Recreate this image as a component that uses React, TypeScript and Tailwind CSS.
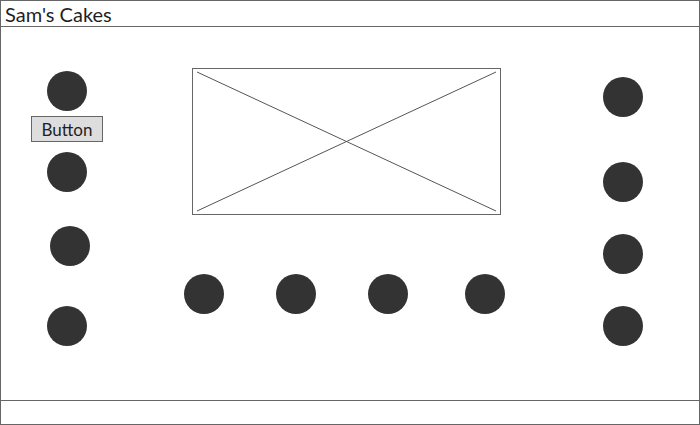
import React from 'react';

const Dot: React.FC<{ className?: string }> = ({ className = '' }) => (
  <div className={`w-[40px] h-[40px] rounded-full bg-[#333333] shrink-0 ${className}`} />
);

export default function App() {
  return (
    <div
      className="w-[700px] h-[425px] border border-[#666666] bg-white flex flex-col text-[#1f1f1f]"
      style={{ fontFamily: 'Lato, "DejaVu Sans", sans-serif' }}
    >
      <header className="h-[26px] border-b border-[#666666] flex items-center pl-[4px]">
        <span className="text-[20px] leading-none">Sam's Cakes</span>
      </header>

      <main className="flex-1 flex items-start">
        {/* left column */}
        <div className="ml-[30px] mt-[44px] w-[72px] flex flex-col items-center">
          <Dot />
          <button className="mt-[5px] w-[72px] h-[26px] bg-[#dddddd] border border-[#666666] text-[17px] leading-none">
            Button
          </button>
          <Dot className="mt-[10px]" />
          <Dot className="mt-[34px] ml-[6px]" />
          <Dot className="mt-[40px]" />
        </div>

        {/* center */}
        <div className="ml-[81px] mt-[41px] flex flex-col">
          <div className="ml-[8px] w-[309px] h-[147px] border border-[#666666]">
            <svg width="307" height="145" className="block">
              <line x1="4" y1="3" x2="303" y2="142" stroke="#555" strokeWidth="1" />
              <line x1="303" y1="3" x2="4" y2="142" stroke="#555" strokeWidth="1" />
            </svg>
          </div>
          <div className="mt-[59px] flex">
            <Dot />
            <Dot className="ml-[52px]" />
            <Dot className="ml-[52px]" />
            <Dot className="ml-[57px]" />
          </div>
        </div>

        {/* right column */}
        <div className="ml-auto mr-[56px] mt-[50px] flex flex-col">
          <Dot />
          <Dot className="mt-[45px]" />
          <Dot className="mt-[32px]" />
          <Dot className="mt-[32px]" />
        </div>
      </main>

      <footer className="h-[24px] border-t border-[#666666]" />
    </div>
  );
}
